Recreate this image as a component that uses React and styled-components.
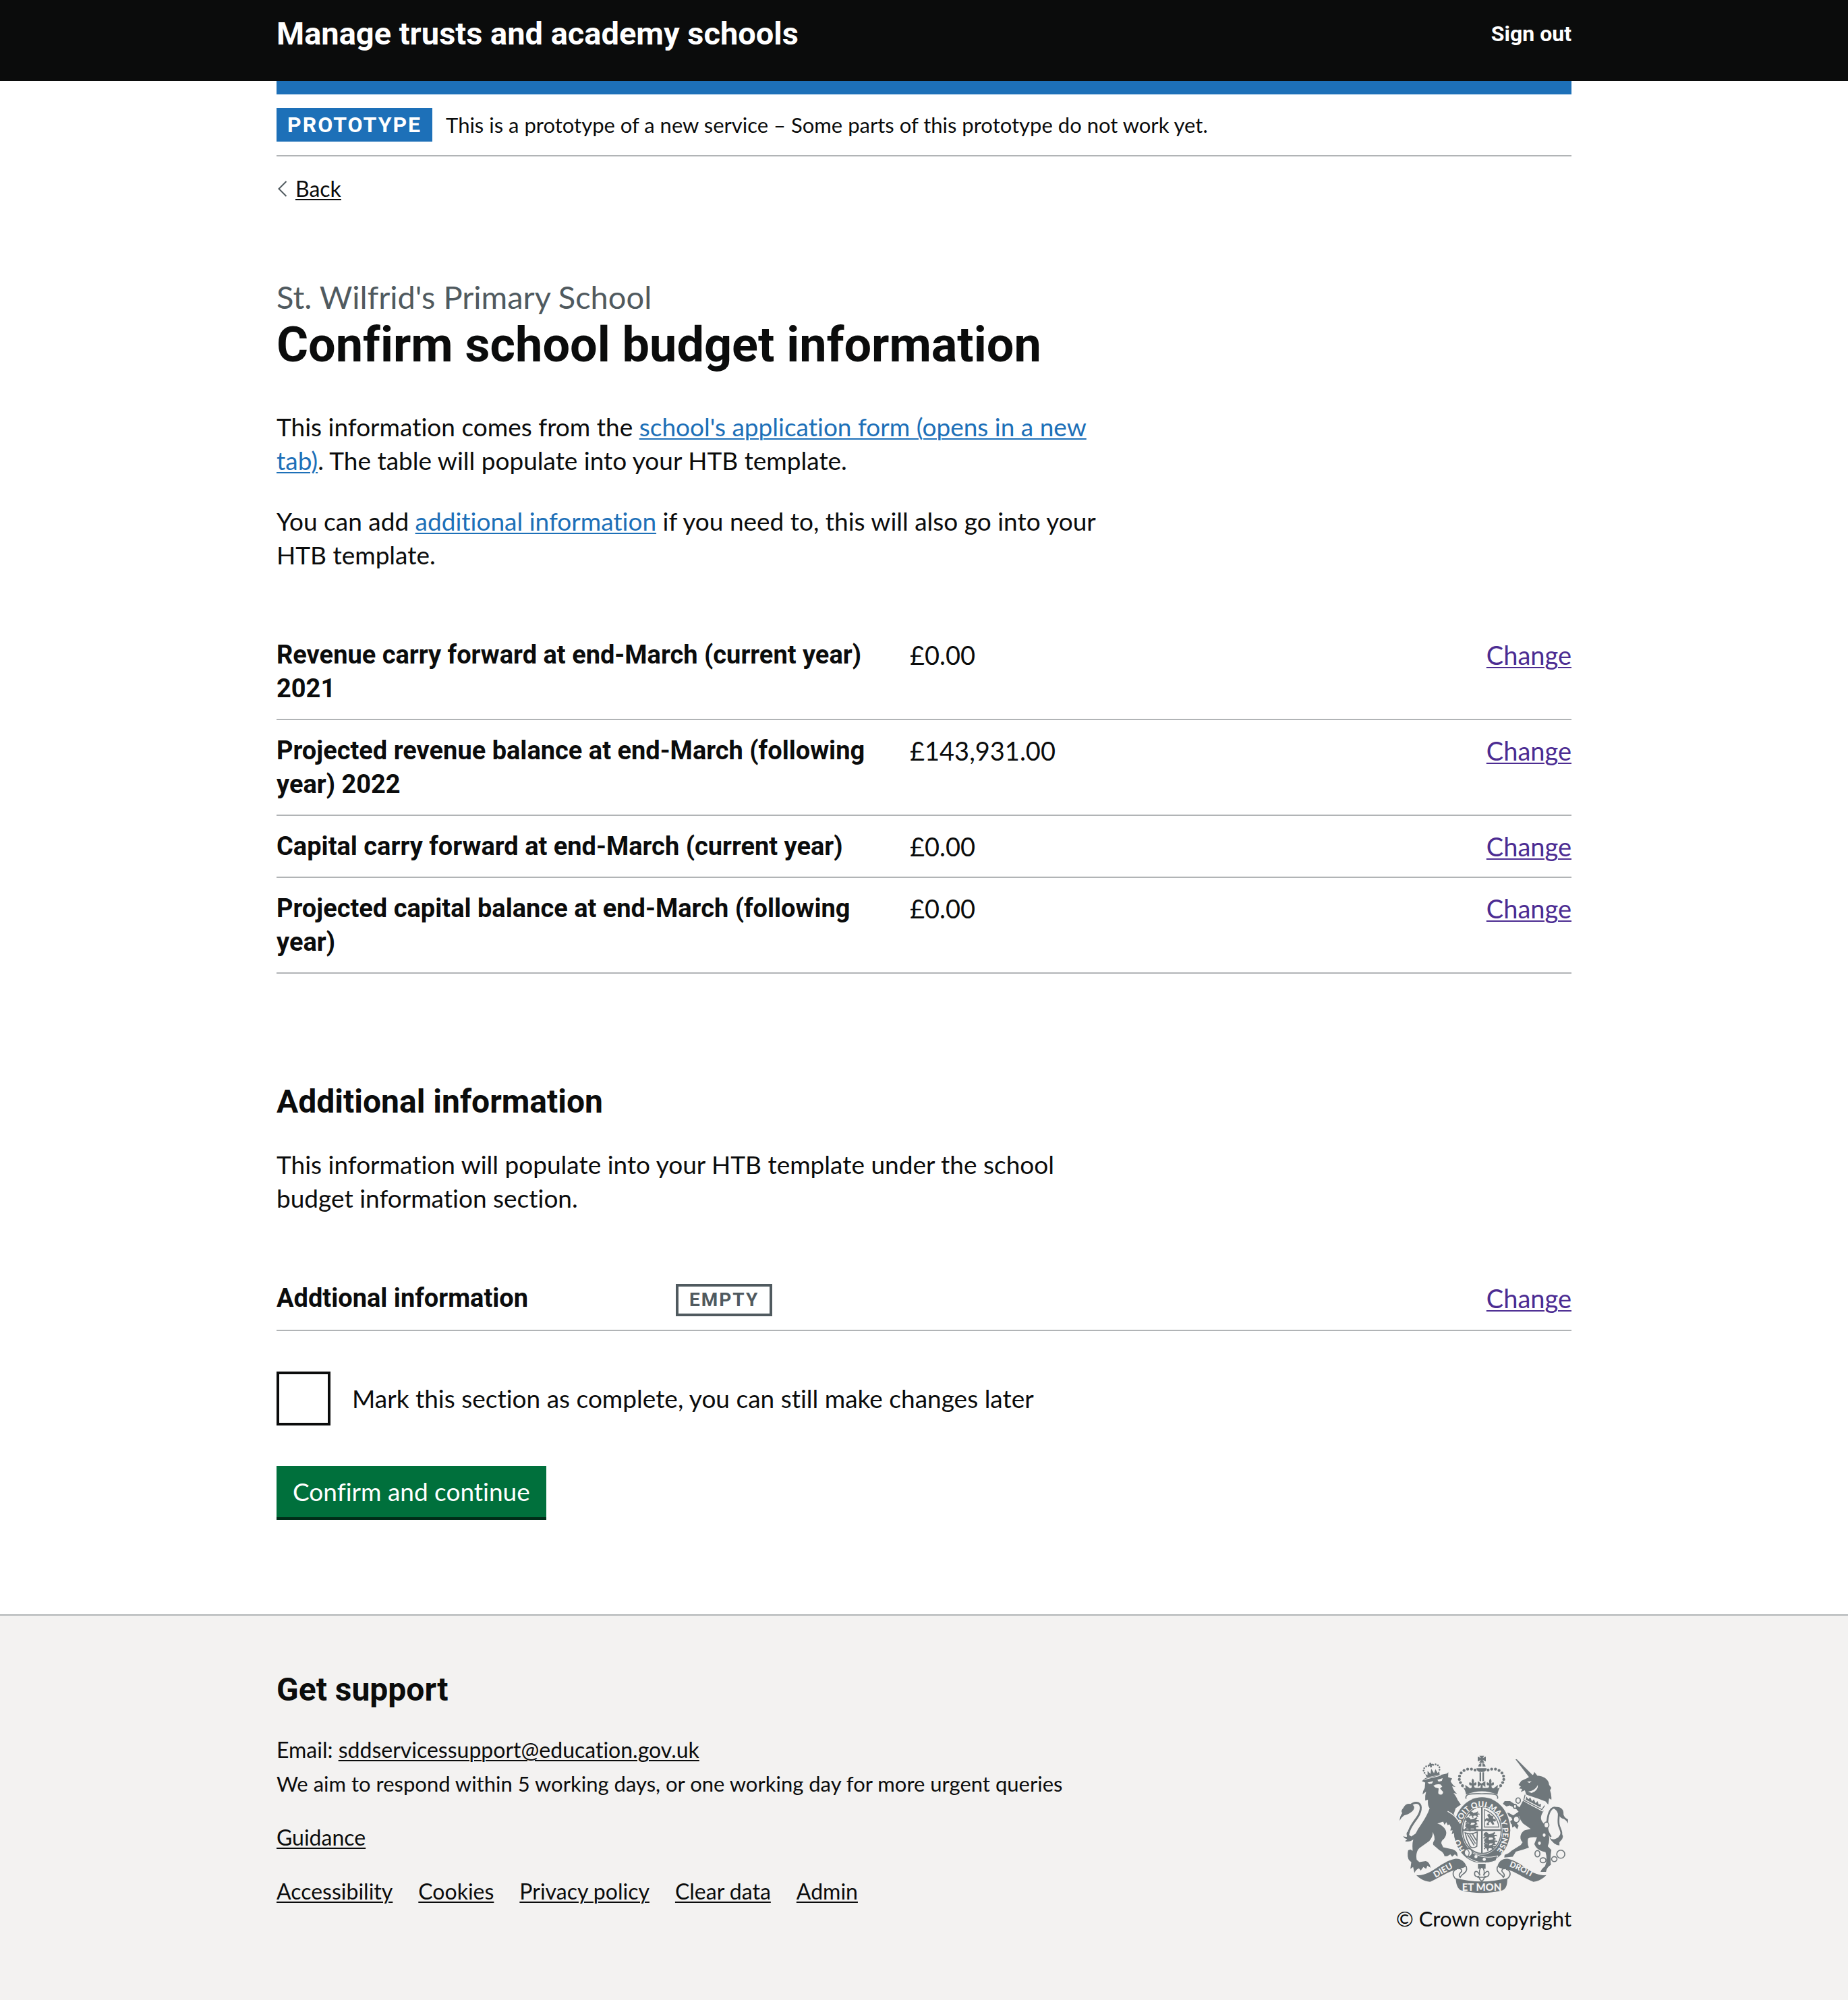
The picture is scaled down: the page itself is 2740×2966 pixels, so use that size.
import React from "react";
import styled, { createGlobalStyle } from "styled-components";

const color = {
  ink: "#0b0c0c",
  secondary: "#505a5f",
  link: "#1d70b8",
  visited: "#4c2c92",
  border: "#b1b4b6",
  footer: "#f3f2f1",
  green: "#00703c",
  greenShadow: "#002d18",
  crest: "#6f777b",
};

const textFont = `Lato, "Liberation Sans", sans-serif`;
const boldFont = `Roboto, "Liberation Sans", sans-serif`;

const GlobalStyle = createGlobalStyle`
  *, *::before, *::after { box-sizing: border-box; }
  body {
    margin: 0;
    background: #ffffff;
    color: ${color.ink};
    font-family: ${textFont};
    font-size: 37px;
    line-height: 50px;
    font-variant-ligatures: no-common-ligatures;
  }
  h1, h2, p, dl, dd, ul { margin: 0; padding: 0; }
`;

const Page = styled.div`
  min-height: 100vh;
  display: flex;
  flex-direction: column;
`;

const Container = styled.div`
  width: min(1920px, 100% - 120px);
  margin: 0 auto;
`;

const Header = styled.header`
  background: ${color.ink};
  padding: 20px 0 40px;
`;

const HeaderRow = styled(Container)`
  display: flex;
  align-items: center;
  justify-content: space-between;
`;

const HeaderLink = styled.a`
  color: #ffffff;
  font-family: ${boldFont};
  font-weight: 700;
  font-size: ${(p) => (p.$large ? "47px" : "32px")};
  line-height: ${(p) => (p.$large ? "60px" : "40px")};
  text-decoration: none;
`;

const PhaseBanner = styled.div`
  display: flex;
  gap: 20px;
  padding: 20px 0;
  border-top: 20px solid ${color.link};
  border-bottom: 2px solid ${color.border};
  font-size: 31px;
`;

const PhaseTag = styled.strong`
  padding: 0 16px;
  background: ${color.link};
  color: #ffffff;
  font-family: ${boldFont};
  font-size: 32px;
  letter-spacing: 2px;
`;

const Link = styled.a`
  color: ${(p) => color[p.$tone || "link"]};
  text-decoration: underline;
  text-decoration-thickness: 2px;
  text-underline-offset: 3px;
`;

const BackRow = styled.nav`
  display: flex;
  align-items: center;
  gap: 12px;
  margin-top: 28px;
  padding-left: 2px;
  font-size: 32px;
  line-height: 40px;
`;

const Main = styled.main`
  padding: 110px 0 144px;
`;

const Caption = styled.p`
  color: ${color.secondary};
  font-size: 47px;
  line-height: 60px;
`;

const Title = styled.h1`
  margin: 4px 0 58px;
  font-family: ${boldFont};
  font-size: 72px;
  line-height: 76px;
`;

const Heading = styled.h2`
  margin: ${(p) => p.$margin};
  font-family: ${boldFont};
  font-size: 48px;
  line-height: 60px;
`;

const Paragraph = styled.p`
  max-width: 1250px;
  & + & { margin-top: 40px; }
`;

const SummaryList = styled.dl`
  margin-top: 78px;
`;

const SummaryRow = styled.div`
  display: grid;
  grid-template-columns: ${(p) => p.$keyWidth} 1fr auto;
  padding: 20px 0;
  border-bottom: 2px solid ${color.border};
`;

const Key = styled.dt`
  padding-right: 40px;
  font-family: ${boldFont};
  font-weight: 700;
  font-size: 38px;
`;

const Value = styled.dd`
  font-size: 38px;
`;

const EmptyTag = styled.strong`
  display: block;
  width: fit-content;
  margin-top: 4px;
  padding: 0 16px;
  border: 4px solid ${color.secondary};
  color: ${color.secondary};
  font-family: ${boldFont};
  font-size: 28px;
  line-height: 40px;
  letter-spacing: 2px;
`;

const CheckRow = styled.div`
  display: flex;
  align-items: center;
  gap: 32px;
  margin: 60px 0;
`;

const Checkbox = styled.input`
  appearance: none;
  width: 80px;
  height: 80px;
  margin: 0;
  border: 4px solid ${color.ink};
  background: transparent;
  &:checked { background: ${color.ink}; }
`;

const SubmitButton = styled.button`
  display: block;
  height: 76px;
  padding: 0 24px;
  border: 0;
  background: ${color.green};
  box-shadow: 0 4px 0 ${color.greenShadow};
  color: #ffffff;
  font: inherit;
  font-variant-ligatures: inherit;
`;

const Footer = styled.footer`
  flex: 1;
  padding: 80px 0 96px;
  border-top: 2px solid ${color.border};
  background: ${color.footer};
  font-size: 32px;
`;

const FooterRow = styled(Container)`
  display: flex;
  align-items: flex-end;
  justify-content: space-between;
`;

const Support = styled.div`
  display: grid;
  gap: 30px;
  padding-bottom: 40px;
`;

const Note = styled.p`
  font-size: 31px;
`;

const FooterLinks = styled.ul`
  display: flex;
  gap: 38px;
  list-style: none;
`;

const Copyright = styled.div`
  display: flex;
  flex-direction: column;
  align-items: center;
  gap: 12px;
  font-size: 31px;
`;

const Arrow = () => (
  <svg width="14" height="24" viewBox="0 0 14 24" aria-hidden="true">
    <path d="M12.500 1 1.500 12 12.500 23" fill="none" stroke={color.secondary} strokeWidth="2" />
  </svg>
);

const dots = (list, r) => list.map(([x, y]) => <circle key={`${x}-${y}`} cx={x} cy={y} r={r} />);

const Beast = ({ x, y, s = 1 }) => (
  <path
    transform={`translate(${x} ${y}) scale(${s})`}
    d="M0 4l7-4 6 3 3 5 12-3 8-5 3 4-6 5 10 1 2 5-8-1-2 5 5 5-7 1-5-6-10 0-3 6 4 3-8 1-1-9-6-1-4 5-3-4 6-6-5-2z"
  />
);

const Crest = () => (
  <svg width="250" height="205" viewBox="72 64 750 616" role="img" aria-label="Royal coat of arms">
    <defs>
      <path id="garter" d="M372 498A97 115 0 1 1 490 504" />
      <path id="dieu" d="M214 622Q262 592 330 556" />
      <path id="droit" d="M546 556Q606 574 678 618" />
    </defs>
    <g fill={color.crest}>
      {/* lion tail */}
      <path d="M110 438C104 405 128 372 148 345C166 320 174 288 156 278C140 272 128 280 118 290" fill="none" stroke={color.crest} strokeWidth="9" />
      <path d="M72 356C74 340 76 332 84 322C76 312 84 306 90 296C98 280 114 276 128 284C142 292 138 304 128 314C114 326 102 330 92 332Q80 340 72 356Z" />
      <path d="M88 424Q98 430 106 426Q100 414 106 404Q112 420 124 426L160 402Q152 424 136 438Q112 454 96 446Q104 442 106 438Q92 436 88 424Z" />
      {/* lion */}
      <path d="M171 180L186 166 282 146 289 140 288 162 306 168 299 180Q308 198 322 206L306 202Q312 222 328 236L312 232Q326 250 330 262L345 284 322 300 313 326 330 352 340 380 300 384 294 372 286 376 280 362 272 374 266 360 240 368Q256 372 264 382C284 398 284 418 270 436Q256 446 258 458L266 474 300 482C322 486 332 496 330 516L318 506 306 516 298 506 284 514 272 514Q268 496 250 488L222 464Q218 454 228 440Q228 424 220 406Q220 430 204 446L160 478C148 490 144 508 148 530L160 540 188 536Q206 540 210 566L196 556 190 570 178 562 166 578 158 568Q146 572 138 588L132 562 120 570 124 540Q106 532 108 500L110 488 120 484 130 490Q126 450 138 424Q150 396 172 366Q196 330 206 300Q196 290 198 262L186 266Q184 244 190 226L174 238Q176 222 184 210L186 186Z" />
      <g transform="rotate(-12 215 130)">
        <path d="M183 142L192 148 196 130 206 146 214 124 222 146 232 130 238 148 247 142 245 158 186 158Z" />
        {dots([[181, 136], [179, 125], [184, 115], [194, 109], [205, 109], [226, 109], [237, 109], [246, 115], [251, 125], [249, 136]], 4)}
        <path d="M211 97h8v6h7v7h-7v8h-8v-8h-7v-7h7z" />
      </g>
      {/* unicorn tail */}
      <path d="M746 428C724 398 728 372 732 344C738 306 756 288 774 302C790 318 774 348 782 378C790 400 800 414 784 430" fill="none" stroke={color.crest} strokeWidth="8" />
      <path d="M756 300C778 286 806 300 802 328Q806 344 822 350V368Q812 348 796 346Q784 340 778 324Q772 308 756 300Z" />
      <path d="M738 430Q752 444 768 436Q784 430 792 410Q804 422 796 438L784 452 784 466Q760 466 738 430Z" />
      {/* unicorn */}
      <path d="M588 82L594 82 664 152 652 166Z" />
      <path d="M602 196L614 178 640 166 668 150 672 138 686 156C716 156 738 176 738 196L748 210 742 220Q750 240 748 262L738 256 734 284 722 270 690 258 636 240 630 220 612 228 618 214 604 212 612 204Z" />
      <path d="M622 266C650 286 682 300 714 312C698 334 698 352 712 366Q728 384 734 410Q744 440 732 470L748 486Q742 520 746 552Q728 562 724 584L700 584Q704 570 720 558Q732 530 722 496Q684 490 672 460L684 430Q656 426 644 436Q640 460 648 476Q616 488 590 494L576 516 538 520 540 508Q560 502 570 490L612 464 620 452C604 440 608 408 630 398L656 392 622 368Q608 352 604 336L588 344 586 356 602 378 596 394 584 380 574 386 572 372 558 362 574 352 570 342 548 330 540 318 560 322 578 332 602 316 588 300 562 288 548 292 532 280 540 268 564 268 588 284 606 296Z" />
      {/* crown */}
      <path d="M427 66h22l-7 11 14-7v22l-14-7 8 13h-24l8-13-14 7v-22l14 7zM422 114q2-14 14-15v15zM441 99q12 1 14 15h-14zM414 122h46q-4 16-14 16h-18q-10 0-14-16z" />
      <path d="M428 140h7v40h-7zM441 140h7v40h-7z" />
      {dots([[408, 130], [392, 126], [375, 126], [359, 132], [346, 143], [339, 157], [338, 172], [343, 186], [352, 200], [466, 130], [482, 126], [499, 126], [515, 132], [528, 143], [535, 157], [536, 172], [531, 186], [522, 200]], 6.500)}
      <path d="M350 200Q358 212 366 212L364 196 378 206 386 212Q396 212 392 198Q380 202 382 186Q388 182 394 190Q390 176 398 168Q406 176 402 190Q408 182 414 186Q416 202 404 198Q402 210 414 210L432 210 434 196 420 206V180L436 190 454 180V206L442 196 442 210 462 210Q472 210 470 198Q458 202 460 186Q466 182 472 190Q468 176 476 168Q484 176 480 190Q486 182 492 186Q494 202 482 198Q480 212 490 212L510 196 508 212Q516 212 524 200Q510 220 508 240C460 220 416 220 368 240Q366 220 350 200Z" />
      <path d="M368 258C360 232 400 236 438 236S516 232 508 258" fill="none" stroke={color.crest} strokeWidth="5" />
    </g>

    {/* garter and shield */}
    <ellipse cx="439" cy="398" rx="131" ry="152" fill={color.footer} />
    <ellipse cx="439" cy="398" rx="126" ry="147" fill={color.crest} />
    <ellipse cx="439" cy="398" rx="91" ry="109" fill={color.footer} />
    <ellipse cx="439" cy="398" rx="86" ry="104" fill="none" stroke={color.crest} strokeWidth="5" />
    <g fill={color.crest}>
      <path d="M435 294h7v206h-7zM354 394h170v7H354z" />
      <Beast x="384" y="314" />
      <Beast x="368" y="340" s="1.300" />
      <Beast x="366" y="366" s="1.300" />
      <Beast x="448" y="406" s="1.300" />
      <Beast x="450" y="432" s="1.300" />
      <Beast x="450" y="458" s="1.100" />
      <path d="M450 306V384H514Q508 330 450 306Z" fill="none" stroke={color.crest} strokeWidth="4" />
      <path d="M462 330l10-6 6 8 12 4-2 10 14 6-4 8-10-2 6 14-8 2-10-14-8 6 4 8-12 2 0-8 8-8-10-6-4 6-4-6 8-10 12 2z" />
      <path d="M364 410Q390 420 418 406L416 470Q390 486 382 462Q370 440 364 410ZM374 416L404 466M384 416L410 458M396 414L414 444" fill="none" stroke={color.crest} strokeWidth="5" />
      <path d="M384 492C430 520 470 524 510 512L500 534C460 550 420 546 376 520Z" stroke={color.footer} strokeWidth="3" />
      <circle cx="378" cy="498" r="18" fill={color.footer} stroke={color.crest} strokeWidth="5" />
      <path d="M372 484Q390 494 376 516" fill="none" stroke={color.crest} strokeWidth="4" />
    </g>
    <g fill={color.footer}>{dots([[412, 516], [449, 528]], 7)}</g>
    <g fill={color.footer} fontFamily="Lato, sans-serif" fontWeight="900" fontSize="35">
      <text><textPath href="#garter" startOffset="14">HO</textPath></text>
      <text><textPath href="#garter" startOffset="136">SOIT QUI MAL Y PENSE</textPath></text>
    </g>

    {/* paw over the garter */}
    <path d="M284 314Q330 340 342 380L346 408 334 422 328 412 320 424 314 410 304 416 308 398 298 400 302 380 288 360Z" fill={color.crest} />
    <path d="M286 314Q326 336 341 366" fill="none" stroke={color.footer} strokeWidth="4" />

    {/* faces and collar */}
    <g fill={color.footer}>
      <path d="M196 186L222 180 216 190 204 192ZM240 174L264 166 260 178 246 182Z" />
      <path d="M222 200Q236 190 254 194L262 204 252 212 266 228Q264 240 256 240Q244 240 244 230L246 212 232 208Z" />
      <path d="M640 182L660 180 650 188ZM688 196Q690 222 660 232L644 226Q676 222 688 196Z" />
      <path d="M630 236L724 288 710 316 620 266Z" />
    </g>
    <path d="M182 172L256 154" stroke={color.footer} strokeWidth="3" />
    <path d="M634 262L636 248 646 260 654 252 662 270 670 260 678 278 686 268 692 284 702 280 700 296Z" fill={color.crest} />
    <path d="M631 240L625 264 706 306 718 288" fill="none" stroke={color.crest} strokeWidth="4" />

    {/* chain */}
    <g fill={color.footer} stroke={color.crest} strokeWidth="5">
      <ellipse cx="600" cy="266" rx="10" ry="12" />
      <ellipse cx="586" cy="292" rx="7" ry="9" />
      <ellipse cx="592" cy="350" rx="13" ry="14" />
      <ellipse cx="726" cy="375" rx="11" ry="13" />
      <ellipse cx="716" cy="420" rx="9" ry="10" />
      <ellipse cx="695" cy="456" rx="9" ry="10" />
      <ellipse cx="686" cy="503" rx="11" ry="14" />
      <ellipse cx="711" cy="532" rx="13" ry="11" />
      <ellipse cx="761" cy="527" rx="12" ry="11" />
      <circle cx="790" cy="505" r="18" />
    </g>

    {/* ribbon */}
    <g fill={color.crest}>
      <path d="M146 598C210 606 250 540 318 526C340 522 362 536 368 556C366 566 350 566 336 570C290 580 250 608 208 628C180 626 160 612 146 598Z" />
      <path d="M726 598C660 606 620 540 556 526C534 522 512 536 508 560C520 570 534 570 548 572C590 584 626 612 668 628C694 626 712 612 726 598Z" />
      <path d="M322 612Q436 642 552 612C552 640 548 656 532 666Q438 690 344 666C328 654 324 640 322 612Z" />
    </g>
    <g fill="none" stroke={color.crest} strokeWidth="5">
      <path d="M322 616C304 596 308 578 326 572M368 558C380 590 346 592 342 608Q332 600 344 586C354 580 346 566 334 570" />
      <path d="M552 614C572 596 566 578 546 572M508 560C498 590 530 592 534 608Q544 600 532 586C522 580 530 566 542 570" />
    </g>
    <g fill={color.footer} fontFamily="Lato, sans-serif" fontWeight="900">
      <text fontSize="38"><textPath href="#dieu" textAnchor="middle" startOffset="50%">DIEU</textPath></text>
      <text fontSize="36"><textPath href="#droit" textAnchor="middle" startOffset="48%">DROIT</textPath></text>
      <text x="438" y="668" fontSize="45" textAnchor="middle">ET MON</text>
    </g>

    {/* fleur-de-lis */}
    <path d="M421 548h34v22h-34z" fill={color.crest} />
    <path d="M438 560C450 574 452 584 446 600C458 576 470 578 470 592C470 606 456 606 452 604L446 618 438 626 430 618 424 604C420 606 406 606 406 592C406 578 418 576 430 600C424 584 426 574 438 560ZM418 608h40" fill={color.footer} stroke={color.crest} strokeWidth="5" />
  </svg>
);

const budget = [
  ["Revenue carry forward at end-March (current year) 2021", "£0.00"],
  ["Projected revenue balance at end-March (following year) 2022", "£143,931.00"],
  ["Capital carry forward at end-March (current year)", "£0.00"],
  ["Projected capital balance at end-March (following year)", "£0.00"],
];

const footerLinks = ["Accessibility", "Cookies", "Privacy policy", "Clear data", "Admin"];

export default function App() {
  return (
    <Page>
      <GlobalStyle />
      <Header>
        <HeaderRow>
          <HeaderLink href="#home" $large>Manage trusts and academy schools</HeaderLink>
          <HeaderLink href="#sign-out">Sign out</HeaderLink>
        </HeaderRow>
      </Header>

      <Container>
        <PhaseBanner>
          <PhaseTag>PROTOTYPE</PhaseTag>
          <span>This is a prototype of a new service – Some parts of this prototype do not work yet.</span>
        </PhaseBanner>
        <BackRow aria-label="Back">
          <Arrow />
          <Link href="#back" $tone="ink">Back</Link>
        </BackRow>

        <Main>
          <Caption>St. Wilfrid's Primary School</Caption>
          <Title>Confirm school budget information</Title>
          <Paragraph>
            This information comes from the{" "}
            <Link href="#application">school's application form (opens in a new tab)</Link>. The table will
            populate into your HTB template.
          </Paragraph>
          <Paragraph>
            You can add <Link href="#additional">additional information</Link> if you need to, this will also
            go into your HTB template.
          </Paragraph>

          <SummaryList>
            {budget.map(([key, value]) => (
              <SummaryRow key={key} $keyWidth="939px">
                <Key>{key}</Key>
                <Value>{value}</Value>
                <Value>
                  <Link href="#change" $tone="visited">Change</Link>
                </Value>
              </SummaryRow>
            ))}
          </SummaryList>

          <Heading id="additional" $margin="160px 0 38px">Additional information</Heading>
          <Paragraph>
            This information will populate into your HTB template under the school budget information section.
          </Paragraph>

          <SummaryList>
            <SummaryRow $keyWidth="592px">
              <Key>Addtional information</Key>
              <Value>
                <EmptyTag>EMPTY</EmptyTag>
              </Value>
              <Value>
                <Link href="#change" $tone="visited">Change</Link>
              </Value>
            </SummaryRow>
          </SummaryList>

          <CheckRow>
            <Checkbox type="checkbox" id="complete" />
            <label htmlFor="complete">Mark this section as complete, you can still make changes later</label>
          </CheckRow>
          <SubmitButton type="button">Confirm and continue</SubmitButton>
        </Main>
      </Container>

      <Footer>
        <FooterRow>
          <Support>
            <Heading $margin="0 0 4px">Get support</Heading>
            <div>
              <p>
                Email: <Link href="#email" $tone="ink">sddservicessupport@education.gov.uk</Link>
              </p>
              <Note>We aim to respond within 5 working days, or one working day for more urgent queries</Note>
            </div>
            <p>
              <Link href="#guidance" $tone="ink">Guidance</Link>
            </p>
            <FooterLinks>
              {footerLinks.map((label) => (
                <li key={label}>
                  <Link href={`#${label.toLowerCase().replace(" ", "-")}`} $tone="ink">{label}</Link>
                </li>
              ))}
            </FooterLinks>
          </Support>
          <Copyright>
            <Crest />
            <span>© Crown copyright</span>
          </Copyright>
        </FooterRow>
      </Footer>
    </Page>
  );
}
